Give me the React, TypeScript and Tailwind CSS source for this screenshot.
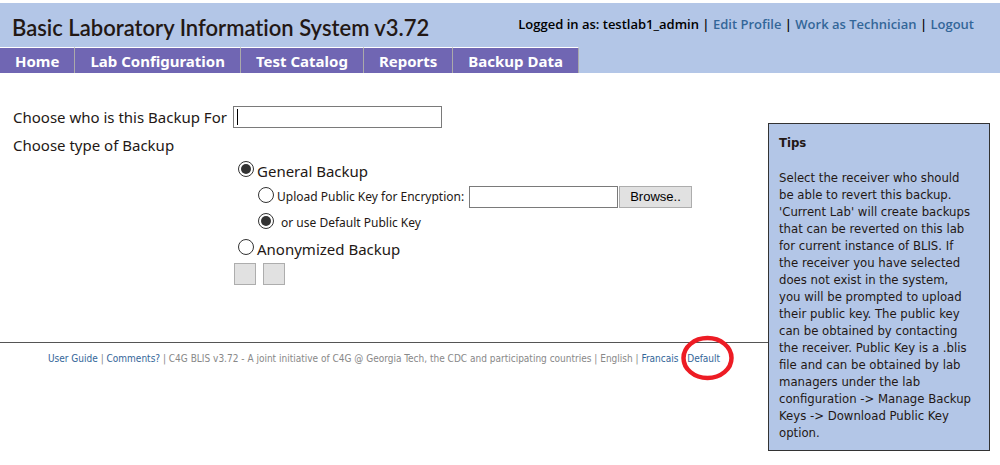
import { useState } from "react";

const tabs = ["Home", "Lab Configuration", "Test Catalog", "Reports", "Backup Data"];

const radio =
  "mb-1 size-4 shrink-0 appearance-none rounded-full border border-[#333] bg-white bg-clip-content p-[2px] checked:bg-[#333]";

function Header() {
  return (
    <header className="mt-[3px] bg-[#b3c6e7]">
      <div className="flex h-11 items-start justify-between pr-[26px] pl-3">
        <h1 className="pt-[9px] font-['Lato',sans-serif] text-[22px] leading-8 font-semibold text-[#231815] [font-variant-ligatures:none]">
          Basic Laboratory Information System v3.72
        </h1>
        <div className="pt-[11px] font-['Open_Sans',sans-serif] text-[13px] leading-5 font-semibold text-black">
          Logged in as: testlab1_admin |{" "}
          <a href="#profile" className="text-[#336699]">Edit Profile</a> |{" "}
          <a href="#technician" className="text-[#336699]">Work as Technician</a> |{" "}
          <a href="#logout" className="text-[#336699]">Logout</a>
        </div>
      </div>
      <nav className="flex">
        {tabs.map((t) => (
          <a
            key={t}
            href="#tab"
            className="border-t border-r border-t-white border-r-[#aaaaaa] bg-[#7066b3] px-[15px] pt-[3px] pb-px text-[15px] leading-[21px] font-bold text-white"
          >
            {t}
          </a>
        ))}
      </nav>
    </header>
  );
}

function BackupForm() {
  const [kind, setKind] = useState("general");
  const [keySource, setKeySource] = useState("default");
  return (
    <form className="pl-[13px] text-[15px] leading-6 text-[#231815]">
      <div className="flex items-center">
        <label htmlFor="receiver" className="w-[220px] whitespace-nowrap">Choose who is this Backup For</label>
        <div className="relative">
          <input id="receiver" type="text" className="block h-[22px] w-[209px] border border-[#7a7a7a] bg-white px-1 caret-transparent outline-none" />
          <span className="absolute top-[3px] left-1 h-4 w-px bg-black" />
        </div>
      </div>
      <div className="pt-1">Choose type of Backup</div>
      <div className="pt-px pl-[225px]">
        <div className="flex h-[26px] items-center gap-[3px]">
          <input id="general" type="radio" name="kind" className={radio} checked={kind === "general"} onChange={() => setKind("general")} />
          <label htmlFor="general">General Backup</label>
        </div>
        <div className="flex h-[26px] items-center gap-[3px] pl-5 text-[12px]">
          <input id="upload" type="radio" name="key" className={radio} checked={keySource === "upload"} onChange={() => setKeySource("upload")} />
          <label htmlFor="upload" className="w-[189px] whitespace-nowrap">Upload Public Key for Encryption:</label>
          <div className="flex gap-px">
            <input type="text" readOnly aria-label="Public key file" className="h-[22px] w-[149px] border border-[#7a7a7a] bg-white px-1" />
            <button type="button" className="h-[22px] w-[73px] border border-[#adadad] bg-[#e1e1e1] font-['Liberation_Sans',sans-serif] text-[13px] leading-5 text-black">
              Browse..
            </button>
          </div>
        </div>
        <div className="flex h-[26px] items-center gap-[7px] pl-5 text-[12px]">
          <input id="default" type="radio" name="key" className={radio} checked={keySource === "default"} onChange={() => setKeySource("default")} />
          <label htmlFor="default">or use Default Public Key</label>
        </div>
        <div className="flex h-[26px] items-center gap-[3px]">
          <input id="anonymized" type="radio" name="kind" className={radio} checked={kind === "anonymized"} onChange={() => setKind("anonymized")} />
          <label htmlFor="anonymized">Anonymized Backup</label>
        </div>
      </div>
      <div className="flex gap-[7px] pt-px pl-[221px]">
        <button type="button" aria-label="Back up" className="size-[22px] border border-[#adadad] bg-[#e1e1e1]" />
        <button type="button" aria-label="Cancel" className="size-[22px] border border-[#adadad] bg-[#e1e1e1]" />
      </div>
    </form>
  );
}

function Footer() {
  return (
    <footer className="mt-[57px] border-t border-t-[#555] pt-2 pl-12 font-['DejaVu_Sans_Condensed',sans-serif] text-[10px] leading-4 whitespace-nowrap text-[#888]">
      <a href="#guide" className="text-[#336699]">User Guide</a> |{" "}
      <a href="#comments" className="text-[#336699]">Comments?</a> | C4G BLIS v3.72 - A joint initiative of C4G @ Georgia Tech, the CDC and participating countries | English |{" "}
      <a href="#fr" className="text-[#336699]">Francais</a> |{" "}
      <span className="relative inline-block">
        <a href="#default" className="text-[#336699]">Default</a>
        <svg className="absolute -top-4 -left-[6px] h-[46px] w-[53px] max-w-none" viewBox="0 0 53 46" fill="none">
          <ellipse cx="26.5" cy="23" rx="24" ry="20" stroke="#ed1c24" strokeWidth="4.5" />
        </svg>
      </span>
    </footer>
  );
}

export default function App() {
  return (
    <div className="bg-white font-['Noto_Sans',sans-serif]">
      <Header />
      <div className="flex items-start pr-[10px]">
        <main className="min-w-0 flex-1 pt-8">
          <BackupForm />
          <Footer />
        </main>
        <aside className="mt-[50px] w-[222px] border border-[#333] bg-[#b3c6e7] pt-[10px] pr-[17px] pb-[9px] pl-[10px] font-['DejaVu_Sans_Condensed',sans-serif] text-[13px] leading-[17px] text-[#231815]">
          <h2 className="font-bold">Tips</h2>
          <p className="pt-[18px]">
            Select the receiver who should be able to revert this backup. 'Current Lab' will create backups that can be
            reverted on this lab for current instance of BLIS. If the receiver you have selected does not exist in the
            system, you will be prompted to upload their public key. The public key can be obtained by contacting the
            receiver. Public Key is a .blis file and can be obtained by lab managers under the lab configuration -&gt;
            Manage Backup Keys -&gt; Download Public Key option.
          </p>
        </aside>
      </div>
    </div>
  );
}
